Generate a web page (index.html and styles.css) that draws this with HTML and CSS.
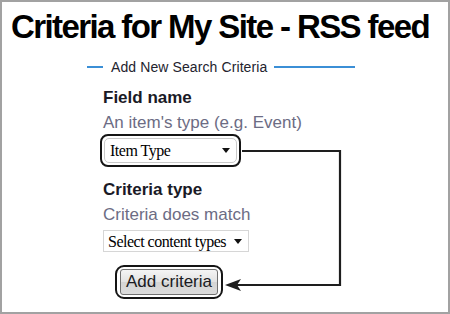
FILE: index.html
```html
<!DOCTYPE html>
<html>
<head>
<meta charset="utf-8">
<link rel="stylesheet" href="styles.css">
</head>
<body>
<div class="frame">
  <h1 class="title">Criteria for My Site - RSS feed</h1>
  <div class="legend">
    <span class="rule rule-short"></span>
    <span class="legend-text">Add New Search Criteria</span>
    <span class="rule rule-long"></span>
  </div>
  <div class="form">
    <div class="label">Field name</div>
    <div class="desc">An item's type (e.g. Event)</div>
    <div class="callout callout-select">
      <div class="select select-item"><span class="select-text">Item Type</span><span class="caret"></span></div>
    </div>
    <div class="label label-2">Criteria type</div>
    <div class="desc">Criteria does match</div>
    <div class="select select-types"><span class="select-text">Select content types</span><span class="caret"></span></div>
    <div class="callout callout-button">
      <div class="button">Add criteria</div>
    </div>
  </div>
  <svg class="connector" width="450" height="314" viewBox="0 0 450 314">
    <polyline points="242,151 340,151 340,285 234,285" fill="none" stroke="#1e1e1e" stroke-width="2.2"/>
    <polygon points="225,285 241,279 237,285 241,291" fill="#1e1e1e"/>
  </svg>
</div>
</body>
</html>
```

FILE: styles.css
```css
html, body {
  margin: 0;
  padding: 0;
  background: #ffffff;
}

.frame {
  position: relative;
  width: 450px;
  height: 314px;
  box-sizing: border-box;
  border: 2px solid #a2a2a2;
  font-family: "Liberation Sans", Arial, sans-serif;
  color: #1c1c24;
  overflow: hidden;
}

.title {
  margin: 6px 0 0 0;
  padding-right: 10px;
  font-size: 33px;
  line-height: 38px;
  font-weight: bold;
  letter-spacing: -1.6px;
  text-align: center;
  color: #000;
}

.legend {
  display: flex;
  align-items: center;
  margin-top: 13px;
  padding-left: 85px;
  height: 16px;
}

.rule {
  display: block;
  height: 2px;
  background: #3b8fd6;
}

.rule-short { width: 16px; }
.rule-long { width: 81px; }

.legend-text {
  font-size: 14px;
  line-height: 16px;
  margin: 0 7px 0 8px;
  letter-spacing: 0.1px;
  color: #23232e;
}

.form {
  display: flex;
  flex-direction: column;
  align-items: flex-start;
  padding-left: 101px;
  margin-top: 13px;
}

.label {
  font-size: 17px;
  line-height: 20px;
  font-weight: bold;
  color: #1a1a26;
}

.label-2 {
  margin-top: 13px;
}

.desc {
  margin-top: 5px;
  font-size: 17px;
  line-height: 20px;
  color: #6c6c84;
}

.callout {
  border: 2px solid #151515;
  border-radius: 8px;
  background: #fff;
}

.callout-select {
  margin-top: 1px;
  margin-left: -3px;
  padding: 2px;
}

.select {
  display: flex;
  align-items: center;
  box-sizing: border-box;
  border: 1px solid #c9c9c9;
  background: #fff;
  font-family: "Liberation Serif", "Times New Roman", serif;
  font-size: 16px;
  letter-spacing: -0.5px;
  color: #000;
}

.select-item {
  width: 133px;
  height: 25px;
  padding-left: 5px;
  border-radius: 5px;
}

.select-types {
  width: 146px;
  height: 22px;
  margin-top: 5px;
  padding-left: 4px;
  border-color: #d6d6d6;
}

.select-text {
  flex: 1;
  line-height: 19px;
}

.caret {
  width: 0;
  height: 0;
  margin-right: 6px;
  border-left: 4px solid transparent;
  border-right: 4px solid transparent;
  border-top: 5px solid #111;
}

.callout-button {
  margin-top: 13px;
  margin-left: 12px;
  padding: 2px 3px;
  border-radius: 9px;
}

.button {
  box-sizing: border-box;
  width: 98px;
  height: 26px;
  border: 1px solid #707070;
  border-radius: 3px;
  background: linear-gradient(#f4f4f4, #e2e2e2 50%, #d4d4d4 51%, #dcdcdc);
  font-size: 17px;
  line-height: 24px;
  text-align: center;
  color: #1a1a22;
}

.connector {
  position: absolute;
  left: -2px;
  top: -2px;
  pointer-events: none;
}
```
